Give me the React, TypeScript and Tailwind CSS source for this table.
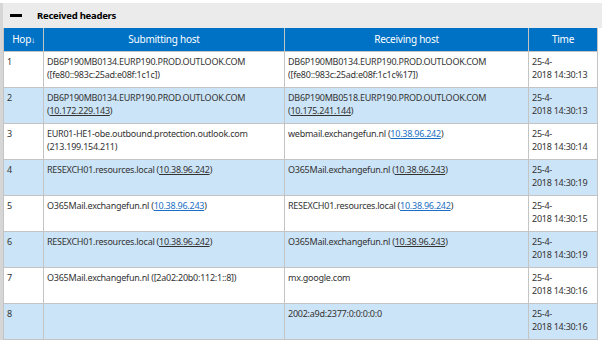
import React from "react";

type Part = string | { ip: string };

type Hop = {
  hop: number;
  from: Part[][];
  to: Part[][];
  time: string;
};

const hops: Hop[] = [
  {
    hop: 1,
    from: [["DB6P190MB0134.EURP190.PROD.OUTLOOK.COM"], ["([fe80::983c:25ad:e08f:1c1c])"]],
    to: [["DB6P190MB0134.EURP190.PROD.OUTLOOK.COM"], ["([fe80::983c:25ad:e08f:1c1c%17])"]],
    time: "14:30:13",
  },
  {
    hop: 2,
    from: [["DB6P190MB0134.EURP190.PROD.OUTLOOK.COM"], ["(", { ip: "10.172.229.143" }, ")"]],
    to: [["DB6P190MB0518.EURP190.PROD.OUTLOOK.COM"], ["(", { ip: "10.175.241.144" }, ")"]],
    time: "14:30:13",
  },
  {
    hop: 3,
    from: [["EUR01-HE1-obe.outbound.protection.outlook.com"], ["(213.199.154.211)"]],
    to: [["webmail.exchangefun.nl (", { ip: "10.38.96.242" }, ")"]],
    time: "14:30:14",
  },
  {
    hop: 4,
    from: [["RESEXCH01.resources.local (", { ip: "10.38.96.242" }, ")"]],
    to: [["O365Mail.exchangefun.nl (", { ip: "10.38.96.243" }, ")"]],
    time: "14:30:19",
  },
  {
    hop: 5,
    from: [["O365Mail.exchangefun.nl (", { ip: "10.38.96.243" }, ")"]],
    to: [["RESEXCH01.resources.local (", { ip: "10.38.96.242" }, ")"]],
    time: "14:30:15",
  },
  {
    hop: 6,
    from: [["RESEXCH01.resources.local (", { ip: "10.38.96.242" }, ")"]],
    to: [["O365Mail.exchangefun.nl (", { ip: "10.38.96.243" }, ")"]],
    time: "14:30:19",
  },
  {
    hop: 7,
    from: [["O365Mail.exchangefun.nl ([2a02:20b0:112:1::8])"]],
    to: [["mx.google.com"]],
    time: "14:30:16",
  },
  {
    hop: 8,
    from: [],
    to: [["2002:a9d:2377:0:0:0:0:0"]],
    time: "14:30:16",
  },
];

const Lines = ({ lines, shaded }: { lines: Part[][]; shaded: boolean }) => (
  <>
    {lines.map((line, i) => (
      <div key={i} className="whitespace-nowrap">
        {line.map((p, j) =>
          typeof p === "string" ? (
            <span key={j}>{p}</span>
          ) : (
            <a
              key={j}
              href="#"
              className={
                shaded
                  ? "underline text-[#333]"
                  : "underline text-[#1a6fc4]"
              }
            >
              {p.ip}
            </a>
          )
        )}
      </div>
    ))}
  </>
);

export default function App() {
  return (
    <div
      className="w-[602px] h-[346px] bg-white overflow-hidden text-[9px] leading-[13px] tracking-[-0.25px] text-[#333]"
      style={{ fontFamily: '"Noto Sans", "Open Sans", sans-serif' }}
    >
      <div className="pt-[3px]">
        <div className="h-[25px] bg-[#ebebeb] border-l-[3px] border-[#d6d6d6] flex items-center">
          <span className="ml-[7px] w-[12px] h-[3px] bg-black" />
          <span className="ml-[15px] font-bold text-[9.5px] text-black">Received headers</span>
        </div>
      </div>
      <div className="w-[598px] border-l-[3px] border-[#d6d6d6]">
        <table className="w-full table-fixed border-collapse">
          <colgroup>
            <col className="w-[40px]" />
            <col className="w-[241px]" />
            <col className="w-[244px]" />
            <col />
          </colgroup>
          <thead>
            <tr className="h-[23px] bg-[#0072c6] text-white text-[10px]">
              <th className="font-normal border border-[#c4c4c4] border-t-0">
                Hop<span className="text-[8px]">↓</span>
              </th>
              <th className="font-normal border border-[#c4c4c4] border-t-0">Submitting host</th>
              <th className="font-normal border border-[#c4c4c4] border-t-0">Receiving host</th>
              <th className="font-normal border border-[#c4c4c4] border-t-0">Time</th>
            </tr>
          </thead>
          <tbody>
            {hops.map((h) => {
              const shaded = h.hop % 2 === 0;
              return (
                <tr
                  key={h.hop}
                  className={`h-[36px] align-top ${shaded ? "bg-[#cce4f7]" : "bg-white"}`}
                >
                  <td className="border border-[#c4c4c4] pl-[3px] pt-[3px]">{h.hop}</td>
                  <td className="border border-[#c4c4c4] pl-[3px] pt-[3px]">
                    <Lines lines={h.from} shaded={shaded} />
                  </td>
                  <td className="border border-[#c4c4c4] pl-[3px] pt-[3px]">
                    <Lines lines={h.to} shaded={shaded} />
                  </td>
                  <td className="border border-[#c4c4c4] pl-[3px] pt-[3px] whitespace-nowrap">
                    <div>25-4-</div>
                    <div>2018 {h.time}</div>
                  </td>
                </tr>
              );
            })}
          </tbody>
        </table>
      </div>
    </div>
  );
}
